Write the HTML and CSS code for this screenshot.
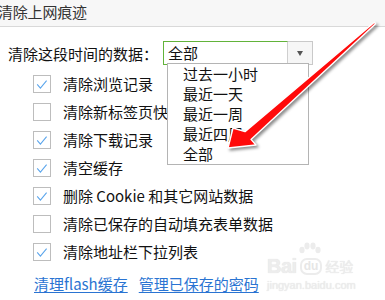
FILE: index.html
```html
<!DOCTYPE html>
<html lang="zh-CN">
<head>
<meta charset="utf-8">
<title>清除上网痕迹</title>
<link rel="stylesheet" href="styles.css">
</head>
<body>
<div class="page">
  <div class="header"><span class="title">清除上网痕迹</span></div>
  <div class="content">
    <div class="range-row">
      <span class="range-label">清除这段时间的数据：</span>
      <div class="select">
        <span class="select-value">全部</span>
        <span class="select-btn"><span class="tri"></span></span>
      </div>
    </div>
    <ul class="options">
      <li class="option"><span class="box checked"><svg viewBox="0 0 17 17" width="17" height="17"><path d="M3.4 8.4 L6.8 12.4 L13.4 4.4" fill="none" stroke="#5aa5ec" stroke-width="1.1"/></svg></span><span class="opt-text">清除浏览记录</span></li>
      <li class="option"><span class="box"></span><span class="opt-text">清除新标签页快照</span></li>
      <li class="option"><span class="box checked"><svg viewBox="0 0 17 17" width="17" height="17"><path d="M3.4 8.4 L6.8 12.4 L13.4 4.4" fill="none" stroke="#5aa5ec" stroke-width="1.1"/></svg></span><span class="opt-text">清除下载记录</span></li>
      <li class="option"><span class="box checked"><svg viewBox="0 0 17 17" width="17" height="17"><path d="M3.4 8.4 L6.8 12.4 L13.4 4.4" fill="none" stroke="#5aa5ec" stroke-width="1.1"/></svg></span><span class="opt-text">清空缓存</span></li>
      <li class="option"><span class="box checked"><svg viewBox="0 0 17 17" width="17" height="17"><path d="M3.4 8.4 L6.8 12.4 L13.4 4.4" fill="none" stroke="#5aa5ec" stroke-width="1.1"/></svg></span><span class="opt-text">删除 Cookie 和其它网站数据</span></li>
      <li class="option"><span class="box"></span><span class="opt-text">清除已保存的自动填充表单数据</span></li>
      <li class="option"><span class="box checked"><svg viewBox="0 0 17 17" width="17" height="17"><path d="M3.4 8.4 L6.8 12.4 L13.4 4.4" fill="none" stroke="#5aa5ec" stroke-width="1.1"/></svg></span><span class="opt-text">清除地址栏下拉列表</span></li>
    </ul>
    <div class="links">
      <a class="link" href="#">清理flash缓存</a>
      <a class="link" href="#">管理已保存的密码</a>
    </div>
  </div>

  <ul class="dropdown">
    <li class="dd-item">过去一小时</li>
    <li class="dd-item">最近一天</li>
    <li class="dd-item">最近一周</li>
    <li class="dd-item">最近四周</li>
    <li class="dd-item">全部</li>
  </ul>

  <div class="watermark">
    <svg class="wm-paw" viewBox="0 0 26 16" width="26" height="16">
      <g fill="#ececec">
        <ellipse cx="5" cy="8" rx="2.6" ry="3.2"/>
        <ellipse cx="10" cy="4" rx="2.6" ry="3.4"/>
        <ellipse cx="16" cy="4" rx="2.6" ry="3.4"/>
        <ellipse cx="21" cy="8" rx="2.6" ry="3.2"/>
      </g>
    </svg>
    <div class="wm-top"><span class="wm-bai">Bai</span><span class="wm-du">du</span><span class="wm-jy">经验</span></div>
    <div class="wm-url">jingyan.baidu.com</div>
  </div>

  <svg class="arrow" viewBox="0 0 385 300" width="385" height="300">
    <polygon points="374.4,22.3 245,131.6 233,128 228,148 256,145 251,139.4 375.6,23.7" fill="#ff0a0a" stroke="#ffffff" stroke-width="1.4" stroke-linejoin="round"/>
  </svg>
</div>
</body>
</html>
```

FILE: styles.css
```css
* { box-sizing: border-box; }
html, body {
  margin: 0;
  padding: 0;
  background: #ffffff;
}
body {
  font-family: "Noto Sans CJK SC", "Noto Sans", sans-serif;
  color: #111;
  width: 385px;
  height: 300px;
  overflow: hidden;
}
.page {
  position: relative;
  width: 385px;
  height: 300px;
  overflow: hidden;
}
.header {
  height: 27px;
  background: #f7f7f7;
  border-bottom: 1px solid #d9d9d9;
  padding-left: 0;
}
.title {
  display: block;
  margin-left: -2px;
  font-size: 15px;
  line-height: 23px;
  color: #333;
  letter-spacing: -0.2px;
}
.content {
  padding: 14px 0 0 8px;
}
.range-row {
  display: flex;
  align-items: center;
  height: 24px;
}
.range-label {
  width: 155px;
  font-size: 15px;
  line-height: 24px;
  white-space: nowrap;
  padding-top: 2px;
}
.select {
  display: flex;
  width: 150px;
  height: 24px;
}
.select-value {
  flex: 1;
  border: 1px solid #62b33a;
  border-right: 1px solid #cfcfcf;
  font-size: 15px;
  line-height: 21px;
  padding-left: 4px;
  color: #111;
}
.select-btn {
  width: 25px;
  border: 1px solid #c9c9c9;
  border-left: none;
  background: #f6f6f6;
  display: flex;
  align-items: center;
  justify-content: center;
}
.tri {
  width: 0;
  height: 0;
  border-left: 3.5px solid transparent;
  border-right: 3.5px solid transparent;
  border-top: 5px solid #555;
}
.options {
  list-style: none;
  margin: 5px 0 0 0;
  padding: 0 0 0 25px;
}
.option {
  display: flex;
  align-items: center;
  height: 28px;
}
.box {
  width: 18px;
  height: 18px;
  border: 1px solid #bdbdbd;
  background: #fff;
  display: flex;
  align-items: center;
  justify-content: center;
  margin-right: 12px;
  flex: none;
}
.box svg { display: block; }
.opt-text {
  font-size: 15px;
  line-height: 20px;
  white-space: nowrap;
  color: #111;
}
.links {
  display: flex;
  gap: 11px;
  margin-top: 3px;
  padding-left: 26px;
  height: 28px;
  align-items: center;
}
.link {
  font-size: 15px;
  color: #2a74d2;
  text-decoration: underline;
  text-underline-offset: 2px;
  white-space: nowrap;
}
.dropdown {
  position: absolute;
  left: 167px;
  top: 63px;
  width: 142px;
  margin: 0;
  padding: 0;
  list-style: none;
  background: #fff;
  border: 1px solid #b4b4b4;
}
.dd-item {
  height: 20px;
  line-height: 20px;
  padding-left: 15px;
  font-size: 15px;
  color: #111;
  white-space: nowrap;
}
.watermark {
  position: absolute;
  left: 267px;
  top: 242px;
  width: 100px;
  color: #ededed;
  font-family: "Liberation Sans", sans-serif;
  white-space: nowrap;
}
.wm-paw {
  display: block;
  margin-left: 30px;
}
.wm-top {
  display: flex;
  align-items: center;
  height: 17px;
  white-space: nowrap;
}
.wm-bai {
  font-size: 20px;
  font-weight: bold;
  line-height: 17px;
  letter-spacing: -0.5px;
  text-shadow: 0 0 1px #dcdcdc;
}
.wm-du {
  margin-left: 3px;
  font-size: 12px;
  font-weight: bold;
  line-height: 13px;
  padding: 0 2px;
  border: 2px solid #ececec;
  border-radius: 7px;
  color: #e6e6e6;
}
.wm-jy {
  margin-left: 3px;
  font-family: "Noto Sans CJK SC", sans-serif;
  font-size: 14px;
  line-height: 17px;
  text-shadow: 0 0 1px #dcdcdc;
}
.wm-url {
  font-size: 11px;
  line-height: 13px;
  margin-top: 4px;
  text-shadow: 0 0 1px #dcdcdc;
}
.arrow {
  position: absolute;
  left: 0;
  top: 0;
  filter: drop-shadow(2px 2px 1.5px rgba(0,0,0,0.45));
}
```
